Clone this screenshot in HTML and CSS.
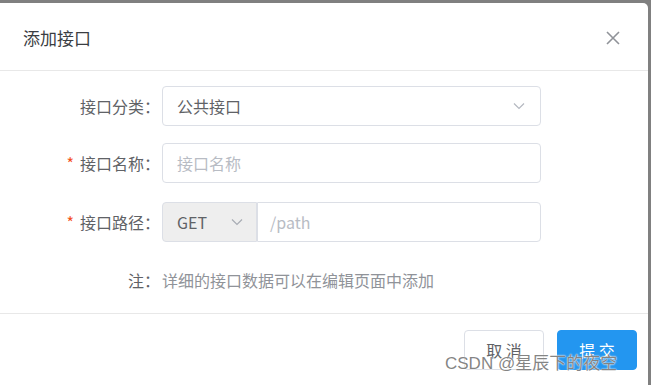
FILE: index.html
```html
<!DOCTYPE html>
<html lang="zh">
<head>
<meta charset="utf-8">
<title>添加接口</title>
<link rel="stylesheet" href="styles.css">
</head>
<body>
<div class="dialog">
  <div class="dialog-header">
    <span class="dialog-title">添加接口</span>
    <span class="close-btn">
      <svg width="14" height="14" viewBox="0 0 14 14"><path d="M1 1L13 13M13 1L1 13" stroke="#909399" stroke-width="1.6" fill="none"/></svg>
    </span>
  </div>
  <div class="dialog-body">
    <div class="form-item item-1">
      <label class="form-label">接口分类：</label>
      <div class="form-control select">
        <span class="value">公共接口</span>
        <svg class="chev" width="12" height="8" viewBox="0 0 12 8"><path d="M1 1.5L6 6.5L11 1.5" stroke="#b4b8c0" stroke-width="1.2" fill="none"/></svg>
      </div>
    </div>
    <div class="form-item item-2">
      <label class="form-label"><span class="req">*</span>接口名称：</label>
      <div class="form-control input"><span class="placeholder">接口名称</span></div>
    </div>
    <div class="form-item item-3">
      <label class="form-label"><span class="req">*</span>接口路径：</label>
      <div class="group">
        <div class="method">
          <span class="value">GET</span>
          <svg class="chev" width="12" height="8" viewBox="0 0 12 8"><path d="M1 1.5L6 6.5L11 1.5" stroke="#a8acb4" stroke-width="1.2" fill="none"/></svg>
        </div>
        <div class="path-input"><span class="placeholder">/path</span></div>
      </div>
    </div>
    <div class="form-item note-item">
      <label class="form-label note-label">注：</label>
      <div class="note-text">详细的接口数据可以在编辑页面中添加</div>
    </div>
  </div>
  <div class="dialog-footer">
    <button class="btn btn-cancel">取 消</button>
    <button class="btn btn-primary">提 交</button>
  </div>
</div>
<div class="watermark">CSDN @星辰下的夜空</div>
</body>
</html>
```
FILE: styles.css
```css
* { box-sizing: border-box; }
html, body {
  margin: 0;
  padding: 0;
  width: 651px;
  height: 385px;
  overflow: hidden;
}
body {
  background: #808080;
  font-family: "Noto Sans CJK SC", "Microsoft YaHei", sans-serif;
  position: relative;
}
.dialog {
  margin-top: 3px;
  margin-left: -6px;
  width: 654px;
  height: 400px;
  background: #fff;
  border-radius: 5px;
}
.dialog-header {
  height: 68px;
  display: flex;
  align-items: center;
  justify-content: space-between;
  padding: 0 28px 0 29px;
  border-bottom: 1px solid #e8e8e8;
}
.dialog-title {
  font-size: 17px;
  color: #3a3d42;
  line-height: 1;
  margin-top: 1px;
}
.close-btn {
  display: flex;
  margin-top: 3px;
}
.dialog-body {
  padding: 15px 0 14px 0;
  border-bottom: 1px solid #e8e8e8;
  height: 243px;
}
.form-item {
  display: flex;
  align-items: center;
  height: 40px;
}
.item-1 { margin-bottom: 17px; }
.item-2 { margin-bottom: 19px; }
.item-3 { margin-bottom: 18px; }
.form-label {
  width: 166px;
  text-align: right;
  font-size: 16px;
  color: #606266;
  padding-right: 0;
  flex: none;
}
.req {
  color: #f4511e;
  margin-right: 6px;
}
.form-control {
  width: 379px;
  height: 40px;
  border: 1px solid #dcdfe6;
  border-radius: 4px;
  display: flex;
  align-items: center;
  padding: 0 15px 0 14px;
  font-size: 16px;
  margin-left: 2px;
}
.select { justify-content: space-between; }
.value { color: #606266; }
.placeholder { color: #b8bcc4; }
.group {
  display: flex;
  margin-left: 2px;
}
.method {
  width: 95px;
  height: 40px;
  background: #eeeeee;
  border: 1px solid #dcdfe6;
  border-radius: 4px 0 0 4px;
  display: flex;
  align-items: center;
  justify-content: space-between;
  padding: 0 13px 0 14px;
  font-size: 16px;
}
.path-input {
  width: 284px;
  height: 40px;
  border: 1px solid #dcdfe6;
  border-radius: 0 4px 4px 0;
  display: flex;
  align-items: center;
  padding: 0 12px;
  font-size: 16px;
}
.note-label { color: #606266; }
.note-text {
  margin-left: 2px;
  font-size: 16px;
  color: #909399;
}
.dialog-footer {
  display: flex;
  justify-content: flex-end;
  gap: 13px;
  padding: 16px 11px 0 0;
}
.btn {
  width: 80px;
  height: 40px;
  border-radius: 4px;
  font-family: inherit;
  font-size: 16px;
  cursor: pointer;
}
.btn-cancel {
  background: #fff;
  border: 1px solid #dcdfe6;
  color: #606266;
}
.btn-primary {
  background: #2396f0;
  border: 1px solid #2396f0;
  color: #fff;
}
.watermark {
  position: absolute;
  left: 445px;
  top: 349px;
  font-family: "Liberation Sans", "Noto Sans CJK SC", sans-serif;
  font-size: 17px;
  color: rgba(110, 110, 110, 0.85);
  text-shadow: 0 0 2px #fff, 0 0 1px #fff;
  white-space: nowrap;
}
```
